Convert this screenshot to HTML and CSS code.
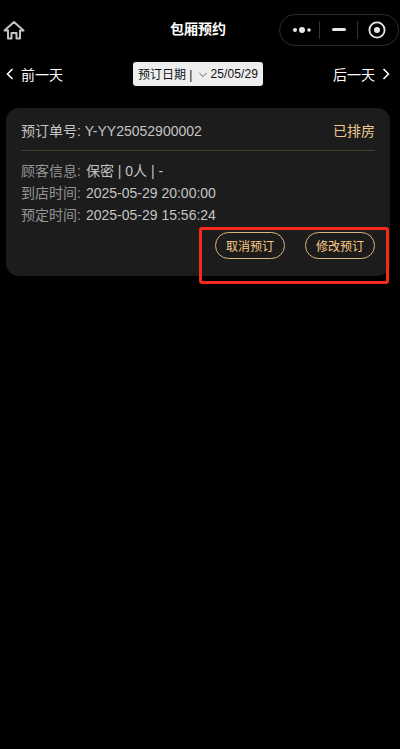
FILE: index.html
```html
<!DOCTYPE html>
<html lang="zh-CN">
<head>
  <meta charset="UTF-8" />
  <meta name="viewport" content="width=device-width, initial-scale=1.0" />
  <title>包厢预约</title>
  <link rel="stylesheet" href="styles.css">
</head>
<body>
  <header class="topbar">
    <svg class="home" width="22" height="20" viewBox="0 0 22 20" fill="none" stroke="#c4c4c4" stroke-width="2">
      <path d="M1.5 10.5 L11 2 L20.5 10.5 H17 V18.5 H13.5 V13 H8.5 V18.5 H5 V10.5 Z" stroke-linejoin="round"/>
    </svg>
    <div class="title">包厢预约</div>
    <div class="capsule">
      <div class="cap-seg cap-more">
        <svg width="20" height="10" viewBox="0 0 20 10">
          <circle cx="3" cy="5" r="2" fill="#e8e8e8"/>
          <circle cx="10" cy="5" r="3" fill="#e8e8e8"/>
          <circle cx="17" cy="5" r="1.8" fill="#e8e8e8"/>
        </svg>
      </div>
      <div class="cap-seg cap-mid"><span class="cap-minus"></span></div>
      <div class="cap-seg cap-close">
        <svg width="18" height="18" viewBox="0 0 18 18" fill="none">
          <circle cx="9" cy="9" r="7.6" stroke="#e8e8e8" stroke-width="1.8"/>
          <circle cx="9" cy="9" r="3" fill="#e8e8e8"/>
        </svg>
      </div>
    </div>
  </header>

  <nav class="daybar">
    <div class="day">
      <svg width="8" height="12" viewBox="0 0 8 12" fill="none" stroke="#fff" stroke-width="1.6"><path d="M6.5 1 L1.5 6 L6.5 11"/></svg>
      <span>前一天</span>
    </div>
    <div class="datepick">
      <span>预订日期 |</span>
      <svg class="date-arrow" width="10" height="6" viewBox="0 0 10 6" fill="none" stroke="#444" stroke-width="1"><path d="M0.5 0.5 L5 5 L9.5 0.5"/></svg>
      <span class="date-val">25/05/29</span>
    </div>
    <div class="day">
      <span>后一天</span>
      <svg width="8" height="12" viewBox="0 0 8 12" fill="none" stroke="#fff" stroke-width="1.6"><path d="M1.5 1 L6.5 6 L1.5 11"/></svg>
    </div>
  </nav>

  <section class="card">
    <div class="card-head">
      <div class="order-no">预订单号: Y-YY25052900002</div>
      <div class="status">已排房</div>
    </div>
    <div class="rows">
      <div class="row"><span class="label">顾客信息:</span><span class="value">保密 | 0人 | -</span></div>
      <div class="row"><span class="label">到店时间:</span><span class="value">2025-05-29 20:00:00</span></div>
      <div class="row"><span class="label">预定时间:</span><span class="value">2025-05-29 15:56:24</span></div>
    </div>
    <div class="actions">
      <button class="btn">取消预订</button>
      <button class="btn">修改预订</button>
    </div>
    <div class="mark"></div>
  </section>
</body>
</html>
```

FILE: styles.css
```css
body {
  margin: 0;
  min-height: 749px;
  background: #000;
  color: #fff;
  font-family: "Liberation Sans", "Noto Sans CJK SC", sans-serif;
}

.topbar {
  display: flex;
  align-items: center;
  height: 59px;
  padding: 0 1px 0 3px;
}

.title {
  flex: 1;
  text-align: center;
  font-size: 14px;
  font-weight: bold;
  padding: 0 0 3px 92px;
}

.capsule {
  display: flex;
  align-items: center;
  box-sizing: border-box;
  width: 120px;
  height: 32px;
  border: 1px solid #2c2c2c;
  border-radius: 16px;
}

.cap-seg {
  display: flex;
  align-items: center;
  justify-content: center;
  height: 18px;
}

.cap-more {
  width: 40px;
  padding-left: 5px;
  box-sizing: border-box;
  border-right: 1px solid #333;
}

.cap-mid {
  width: 37px;
  border-right: 1px solid #333;
}

.cap-close {
  width: 40px;
  padding-right: 3px;
  box-sizing: border-box;
}

.cap-minus {
  width: 14px;
  height: 3px;
  border-radius: 2px;
  background: #e8e8e8;
}

.daybar {
  display: flex;
  align-items: center;
  justify-content: space-between;
  height: 30px;
  padding: 0 10px 0 6px;
}

.day {
  display: flex;
  align-items: center;
  gap: 7px;
  font-size: 14px;
}

.datepick {
  display: flex;
  align-items: center;
  box-sizing: border-box;
  width: 130px;
  height: 24px;
  padding: 0 5px 1px;
  border-radius: 3px;
  background: #eee;
  color: #111;
  font-size: 12px;
  white-space: nowrap;
}

.date-arrow {
  margin: 2px 3px 0 7px;
}

.date-val {
  letter-spacing: 0.1px;
}

.card {
  position: relative;
  box-sizing: border-box;
  width: 384px;
  height: 168px;
  margin: 19px 0 0 6px;
  padding: 0 15px;
  border-radius: 13px;
  background: #1c1c1c;
  font-size: 14px;
}

.card-head {
  display: flex;
  justify-content: space-between;
  align-items: center;
  height: 40px;
  padding-top: 2px;
  border-bottom: 1px solid #453c2e;
}

.order-no {
  color: #c4c4c4;
}

.status {
  color: #eec88e;
}

.rows {
  padding-top: 9px;
}

.row {
  display: flex;
  align-items: baseline;
  gap: 5px;
  height: 22px;
  line-height: 22px;
}

.label {
  color: #959595;
}

.value {
  color: #c4c4c4;
}

.actions {
  display: flex;
  justify-content: flex-end;
  gap: 20px;
  margin-top: 6px;
}

.btn {
  box-sizing: border-box;
  width: 70px;
  height: 27px;
  padding: 0;
  border: 1px solid #d9b77e;
  border-radius: 14px;
  background: transparent;
  color: #fccb84;
  font-family: inherit;
  font-size: 12px;
}

.mark {
  position: absolute;
  left: 193px;
  top: 119px;
  width: 190px;
  height: 57px;
  box-sizing: border-box;
  border: 3px solid #f52a1a;
  border-radius: 3px;
}
```
